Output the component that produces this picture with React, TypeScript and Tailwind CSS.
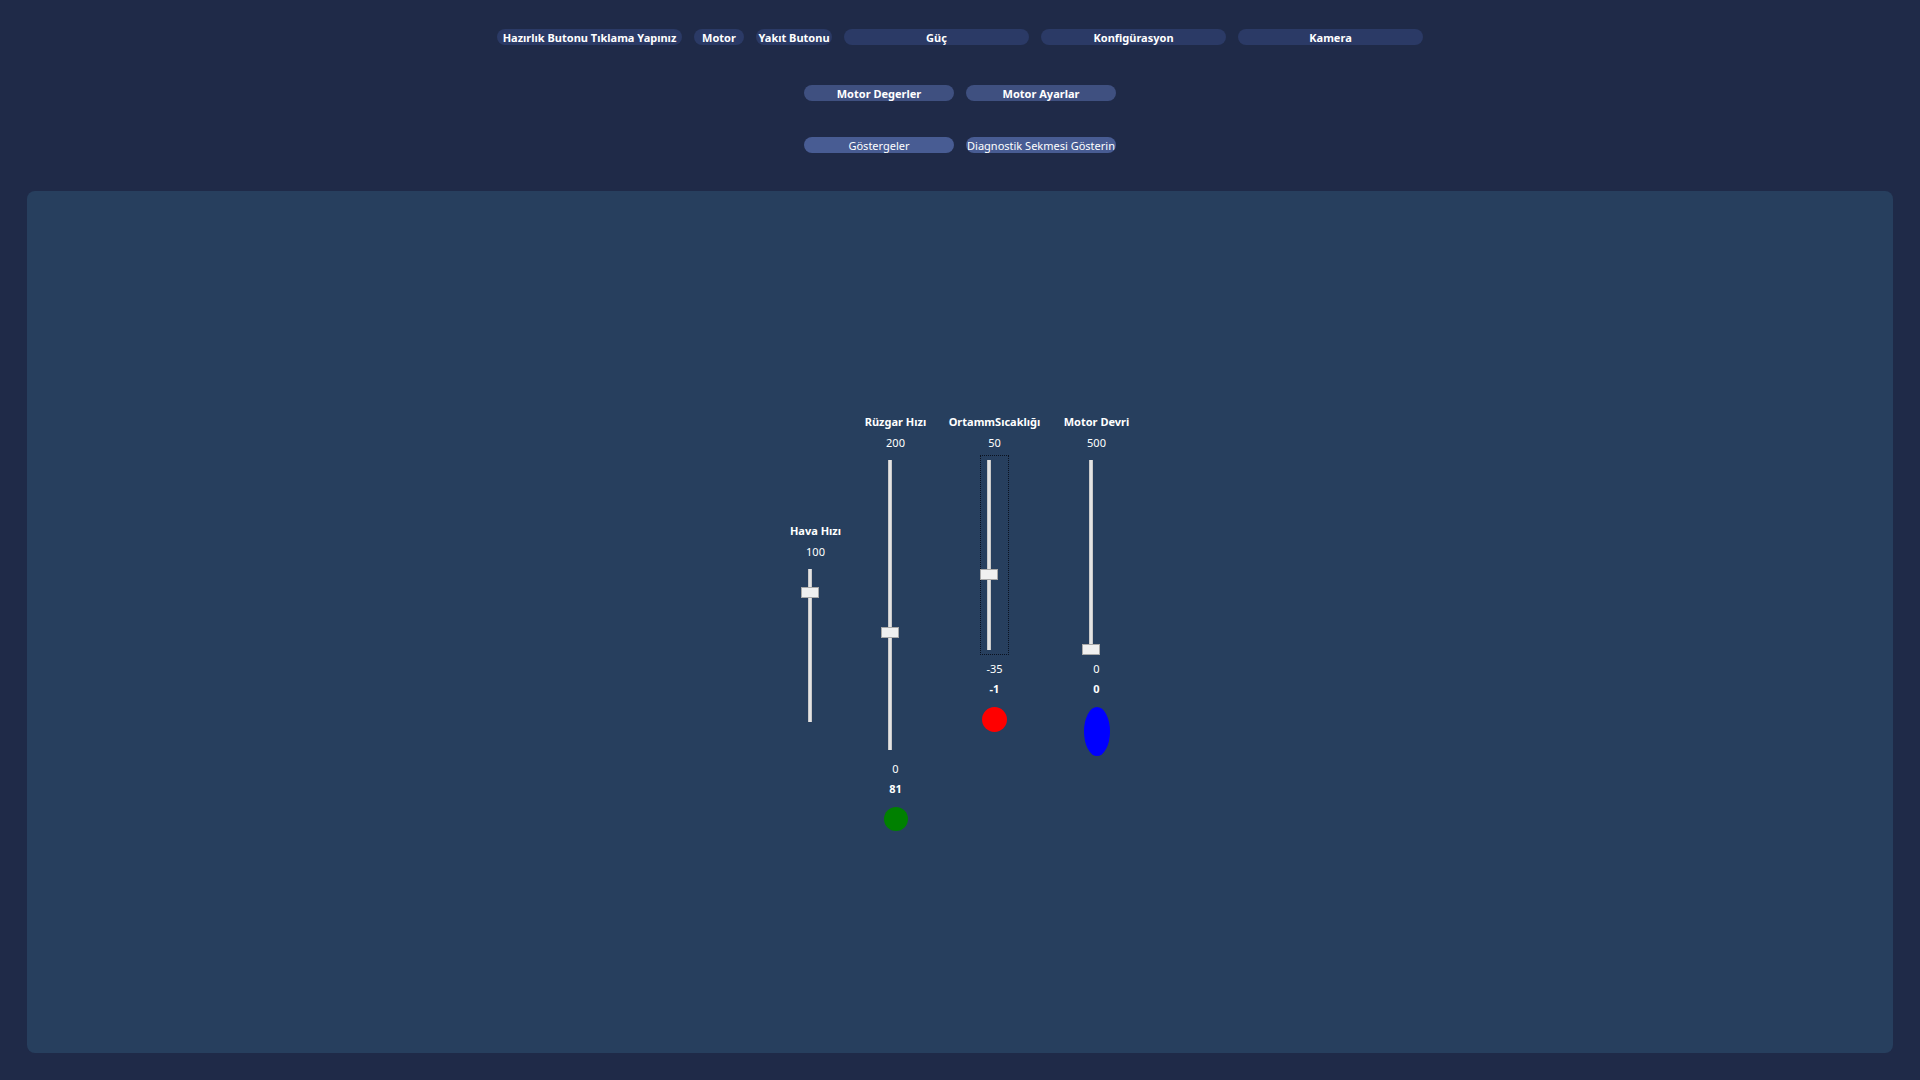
const TOP_TABS = [
  { label: "Hazırlık Butonu Tıklama Yapınız", w: "w-[185px]", bg: "bg-[#2b3a66]" },
  { label: "Motor", w: "w-[50px]", bg: "bg-[#2b3a66]" },
  { label: "Yakıt Butonu", w: "w-[76px]", bg: "bg-[#2b3a66]" },
  { label: "Güç", w: "w-[185px]", bg: "bg-[#2b3a66]" },
  { label: "Konfigürasyon", w: "w-[185px]", bg: "bg-[#2b3a66]" },
  { label: "Kamera", w: "w-[185px]", bg: "bg-[#2b3a66]" },
];

const Pill = ({
  label,
  className,
}: {
  label: string;
  className: string;
}) => (
  <div
    className={`h-4 rounded-full flex items-center justify-center text-[11px] leading-none text-white whitespace-nowrap overflow-hidden ${className}`}
  >
    {label}
  </div>
);

type SliderProps = {
  height: number;
  thumbTop: number;
  focused?: boolean;
};

const VSlider = ({ height, thumbTop, focused }: SliderProps) => (
  <div className="relative flex justify-center w-[18px] py-[5px] mr-3">
    {focused && (
      <div className="absolute -top-0 bottom-0 left-0 -right-[11px] border border-dotted border-[#0b1220]" />
    )}
    <div
      className="relative w-[4px] bg-[#e4e4e4] border-x border-[#c9c9c9]"
      style={{ height }}
    >
      <div
        className="absolute left-1/2 -translate-x-1/2 w-[18px] h-[11px] bg-[#f0f0f0] border border-[#a8a8a8]"
        style={{ top: thumbTop }}
      />
    </div>
  </div>
);

type ColumnProps = SliderProps & {
  title: string;
  max: string;
  min?: string;
  value?: string;
  indicator?: string;
  width: string;
};

const SliderColumn = ({
  title,
  max,
  min,
  value,
  indicator,
  width,
  ...slider
}: ColumnProps) => (
  <div className={`flex flex-col items-center ${width}`}>
    <div className="text-[11px] leading-4 font-bold text-white whitespace-nowrap">
      {title}
    </div>
    <div className="mt-[5px] text-[11px] leading-4 text-white">{max}</div>
    <div className="mt-[4px] flex w-full justify-center">
      <VSlider {...slider} />
    </div>
    {min && (
      <div className="mt-[6px] text-[11px] leading-4 text-white">{min}</div>
    )}
    {value && (
      <div className="mt-1 text-[11px] leading-4 font-bold text-white">
        {value}
      </div>
    )}
    {indicator && <div className={`mt-[10px] ${indicator}`} />}
  </div>
);

export default function App() {
  return (
    <div className="h-screen w-full bg-[#1f2a48] flex flex-col font-['Noto_Sans','Open_Sans',sans-serif]">
      <div className="flex justify-center gap-3 pt-[29px]">
        {TOP_TABS.map((t) => (
          <Pill
            key={t.label}
            label={t.label}
            className={`${t.w} ${t.bg} font-bold`}
          />
        ))}
      </div>

      <div className="flex justify-center gap-3 mt-10">
        <Pill label="Motor Degerler" className="w-[150px] bg-[#3f5080] font-bold" />
        <Pill label="Motor Ayarlar" className="w-[150px] bg-[#3f5080] font-bold" />
      </div>

      <div className="flex justify-center gap-3 mt-9">
        <Pill label="Göstergeler" className="w-[150px] bg-[#485c93]" />
        <Pill label="Diagnostik Sekmesi Gösterin" className="w-[150px] bg-[#485c93]" />
      </div>

      <div className="mx-[27px] mt-[38px] h-[862px] rounded-lg bg-[#273f5e] flex items-center justify-center">
        <div className="flex items-center">
          <SliderColumn
            title="Hava Hızı"
            max="100"
            width="w-[60px] mt-[6px]"
            height={153}
            thumbTop={18}
          />
          <div className="flex items-start ml-[10px]">
            <SliderColumn
              title="Rüzgar Hızı"
              max="200"
              min="0"
              value="81"
              width="w-[80px]"
              height={290}
              thumbTop={167}
              indicator="w-6 h-6 rounded-full bg-[#008000]"
            />
            <SliderColumn
              title="OrtammSıcaklığı"
              max="50"
              min="-35"
              value="-1"
              width="w-[96px] ml-[11px]"
              height={190}
              thumbTop={109}
              focused
              indicator="w-[25px] h-[25px] rounded-full bg-[#ff0000]"
            />
            <SliderColumn
              title="Motor Devri"
              max="500"
              min="0"
              value="0"
              width="w-[76px] ml-4"
              height={190}
              thumbTop={184}
              indicator="w-[26px] h-[49px] rounded-[50%] bg-[#0000ff]"
            />
          </div>
        </div>
      </div>
    </div>
  );
}
